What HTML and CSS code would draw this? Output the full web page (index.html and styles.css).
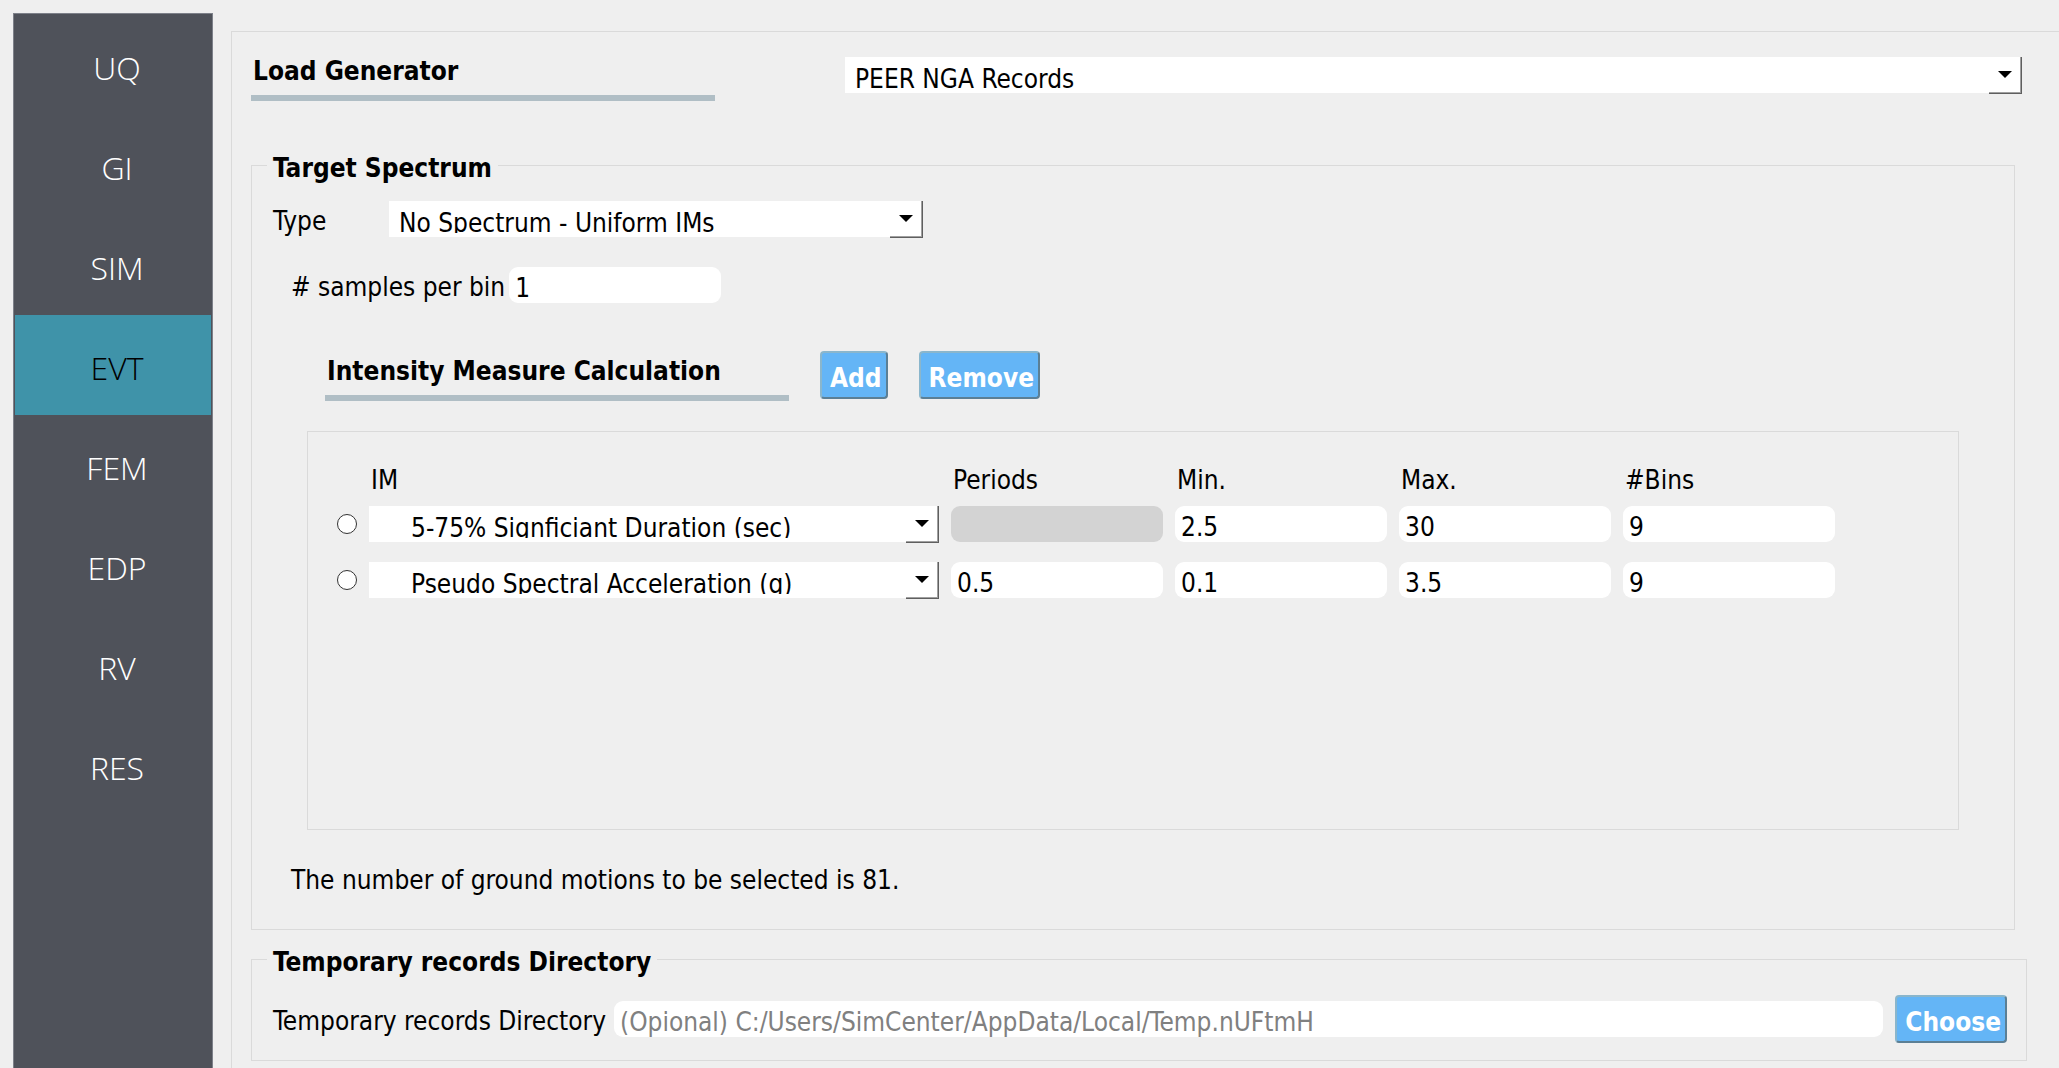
FILE: index.html
```html
<!DOCTYPE html>
<html lang="en">
<head>
<meta charset="utf-8">
<title>Load Generator</title>
<link rel="stylesheet" href="styles.css">
</head>
<body>
<nav class="sidebar">
  <a class="tab" href="#uq">UQ</a>
  <a class="tab" href="#gi">GI</a>
  <a class="tab" href="#sim">SIM</a>
  <a class="tab active" href="#evt" aria-current="page">EVT</a>
  <a class="tab" href="#fem">FEM</a>
  <a class="tab" href="#edp">EDP</a>
  <a class="tab" href="#rv">RV</a>
  <a class="tab" href="#res">RES</a>
</nav>
<main class="panel">
  <header class="top">
    <h1 class="heading"><label for="generator">Load Generator</label></h1>
    <span class="combo"><select id="generator"><option>PEER NGA Records</option></select></span>
  </header>

  <fieldset class="group spectrum">
    <legend>Target Spectrum</legend>
    <div class="field type">
      <label for="type">Type</label>
      <span class="combo"><select id="type"><option>No Spectrum - Uniform IMs</option></select></span>
    </div>
    <div class="field samples">
      <label for="samples"># samples per bin</label>
      <input class="box" id="samples" type="text" value="1">
    </div>
    <div class="measure">
      <h2 class="heading">Intensity Measure Calculation</h2>
      <button class="btn" type="button">Add</button>
      <button class="btn" type="button">Remove</button>
    </div>
    <div class="frame">
      <table class="ims">
        <colgroup><col class="pick"><col class="im"><col><col><col><col></colgroup>
        <thead>
          <tr><td></td><th scope="col">IM</th><th scope="col">Periods</th><th scope="col">Min.</th><th scope="col">Max.</th><th scope="col">#Bins</th></tr>
        </thead>
        <tbody>
          <tr>
            <td><input class="radio" type="radio" name="row" aria-label="Select row 1"></td>
            <td><span class="combo indent"><select aria-label="IM"><option>5-75% Signficiant Duration (sec)</option></select></span></td>
            <td><input class="box" type="text" aria-label="Periods" disabled></td>
            <td><input class="box" type="text" aria-label="Min." value="2.5"></td>
            <td><input class="box" type="text" aria-label="Max." value="30"></td>
            <td><input class="box" type="text" aria-label="#Bins" value="9"></td>
          </tr>
          <tr>
            <td><input class="radio" type="radio" name="row" aria-label="Select row 2"></td>
            <td><span class="combo indent"><select aria-label="IM"><option>Pseudo Spectral Acceleration (g)</option></select></span></td>
            <td><input class="box" type="text" aria-label="Periods" value="0.5"></td>
            <td><input class="box" type="text" aria-label="Min." value="0.1"></td>
            <td><input class="box" type="text" aria-label="Max." value="3.5"></td>
            <td><input class="box" type="text" aria-label="#Bins" value="9"></td>
          </tr>
        </tbody>
      </table>
    </div>
    <p class="note">The number of ground motions to be selected is 81.</p>
  </fieldset>

  <fieldset class="group directory">
    <legend>Temporary records Directory</legend>
    <div class="field">
      <label for="dir">Temporary records Directory</label>
      <input class="box" id="dir" type="text" placeholder="(Opional) C:/Users/SimCenter/AppData/Local/Temp.nUFtmH">
      <button class="btn" type="button">Choose</button>
    </div>
  </fieldset>
</main>
</body>
</html>
```
FILE: styles.css
```css
* { box-sizing: border-box; }

body {
  margin: 0;
  min-height: 100vh;
  padding: 13px 0 0 13px;
  display: flex;
  align-items: stretch;
  gap: 18px;
  background: #efefef;
  color: #000;
  font: 26px/32px "DejaVu Sans Condensed", "Noto Sans", sans-serif;
}

/* Sidebar */
.sidebar {
  flex: 0 0 200px;
  padding: 1px;
  border: 1px solid #7d8089;
  border-bottom: 0;
  background: #4f525a;
}
.tab {
  display: block;
  height: 100px;
  padding: 5px 0 0 8px;
  font: 300 32px/96px "Open Sans", "Noto Sans", sans-serif;
  text-align: center;
  text-decoration: none;
  color: #fff;
}
.tab.active { background: #3f93a9; color: #000; }

/* Main panel */
.panel {
  flex: 1;
  min-width: 0;
  margin-top: 18px;
  padding: 25px 32px 6px 19px;
  border: solid #dadada;
  border-width: 1px 0 0 1px;
}
.top {
  display: flex;
  align-items: flex-start;
  gap: 130px;
  padding-right: 5px;
}
.top .combo { flex: 1; }
.heading {
  flex: 0 0 464px;
  margin: 0;
  padding: 0 0 10px 2px;
  border-bottom: 6px solid #b0bec5;
  font-size: 26px;
  line-height: 28px;
  font-weight: bold;
}

/* Group boxes */
.group {
  min-width: 0;
  margin: 0;
  border: 1px solid #dadada;
}
.group legend {
  padding: 5px 6px 0;
  font-weight: bold;
}
.spectrum { margin: 46px 12px 0 0; padding: 17px 55px 33px 15px; }
.directory { margin-top: 11px; padding: 17px 19px 17px 15px; }

.field { display: flex; align-items: center; }
.field label { height: 36px; padding: 4px 0 0 6px; }
.type label { width: 122px; }
.type .combo { width: 534px; }
.samples { margin-top: 30px; padding-left: 18px; gap: 4px; }
.samples .box { width: 212px; }
.directory .field { gap: 8px; }
.directory .box { flex: 1; min-width: 0; }
.directory .btn { margin-left: 4px; }

/* Controls */
.combo {
  position: relative;
  display: block;
  height: 36px;
  background: #fff;
}
.combo select {
  appearance: none;
  display: block;
  width: 100%;
  height: 32px;
  padding: 9px 36px 0 10px;
  border: 0;
  outline-offset: 2px;
  background: none;
  color: #000;
  font: inherit;
  line-height: 26px;
}
.combo.indent select { padding-left: 42px; }
.combo::before,
.combo::after {
  content: "";
  position: absolute;
  pointer-events: none;
}
.combo::before {
  top: 0;
  right: 0;
  width: 32px;
  height: 36px;
  border: solid #5f5f5f;
  border-width: 0 1px 1px 0;
  box-shadow: inset -1px -1px #a0a0a0;
}
.combo::after {
  top: 14px;
  right: 10px;
  border: solid transparent;
  border-width: 7px 7px 0;
  border-top-color: #000;
}
.box {
  display: block;
  width: 100%;
  height: 36px;
  padding: 5px 6px 0;
  border: 0;
  border-radius: 9px;
  background: #fff;
  color: #000;
  font: inherit;
}
.box:disabled { background: #d3d3d3; }
.box::placeholder { color: #808080; opacity: 1; }
.radio {
  appearance: none;
  display: block;
  width: 20px;
  height: 20px;
  margin: 0;
  border: 1px solid #333;
  border-radius: 50%;
  background: #fff;
}
.radio:checked { box-shadow: inset 0 0 0 5px #fff; background: #333; }
.btn {
  height: 48px;
  padding: 6px 4px 0 8px;
  border: 2px solid;
  border-color: #8ab6cc #5b7f95 #5b7f95 #8ab6cc;
  border-radius: 4px;
  background: #64b5f6;
  color: #fff;
  font: inherit;
  font-weight: bold;
  white-space: nowrap;
}

/* Intensity measures */
.measure {
  display: flex;
  align-items: flex-start;
  gap: 31px;
  margin: 48px 0 0 58px;
}
.measure .heading { margin: 6px 0 0; }
.frame {
  min-height: 399px;
  margin: 30px 0 0 40px;
  padding: 32px 17px;
  border: 1px solid #dadada;
}
.ims {
  width: 1522px;
  max-width: 100%;
  table-layout: fixed;
  border-collapse: separate;
  border-spacing: 12px 0;
}
.ims .pick { width: 20px; }
.ims .im { width: 570px; }
.ims th { padding: 0 2px; text-align: left; font-weight: normal; }
.ims td { padding: 10px 0; }
.ims thead td { padding: 0; }
.note { margin: 34px 0 0 24px; }
```
